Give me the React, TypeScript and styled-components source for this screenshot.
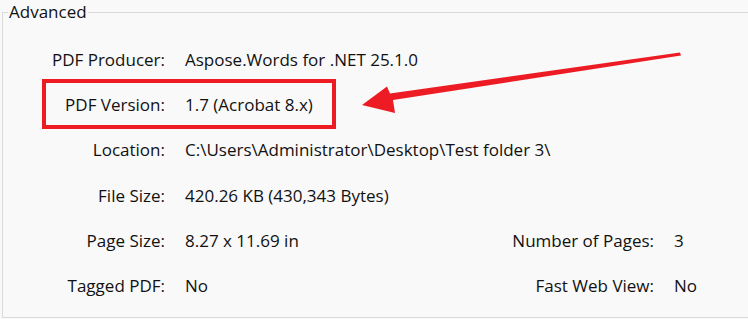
import React from "react";
import styled, { createGlobalStyle } from "styled-components";

const GlobalStyle = createGlobalStyle`
  html, body {
    margin: 0;
    padding: 0;
    background: #f9f9f9;
    overflow: hidden;
  }
  body {
    font-family: "Open Sans", "Noto Sans", sans-serif;
    color: #111;
  }
`;

const Page = styled.div`
  position: relative;
  width: 748px;
  height: 319px;
  overflow: hidden;
  background: #f9f9f9;
`;

const Group = styled.fieldset`
  margin: 2px 0 0 2px;
  width: 780px;
  height: 316px;
  box-sizing: border-box;
  border: 1px solid #dadada;
  padding: 0;
`;

const Legend = styled.legend`
  font-size: 17px;
  padding: 0 1px;
  margin-left: 5px;
  line-height: 20px;
  color: #111;
`;

const Grid = styled.div`
  display: grid;
  grid-template-columns: 162px 1fr auto 57px;
  grid-auto-rows: 45.2px;
  column-gap: 20px;
  padding-top: 15px;
  width: 728px;
  font-size: 17px;
`;

const Label = styled.div`
  text-align: right;
  align-self: center;
  white-space: nowrap;
`;

const Value = styled.div<{ $span?: boolean }>`
  align-self: center;
  white-space: nowrap;
  grid-column: ${(p) => (p.$span ? "2 / 5" : "auto")};
`;

const Highlight = styled.div`
  position: absolute;
  left: 42px;
  top: 79px;
  width: 294px;
  height: 50px;
  box-sizing: border-box;
  border: 4px solid #ed1c24;
  pointer-events: none;
`;

const Arrow = styled.svg`
  position: absolute;
  left: 0;
  top: 0;
  pointer-events: none;
`;

const wide = [
  ["PDF Producer:", "Aspose.Words for .NET 25.1.0"],
  ["PDF Version:", "1.7 (Acrobat 8.x)"],
  ["Location:", "C:\\Users\\Administrator\\Desktop\\Test folder 3\\"],
  ["File Size:", "420.26 KB (430,343 Bytes)"],
];

const paired = [
  ["Page Size:", "8.27 x 11.69 in", "Number of Pages:", "3"],
  ["Tagged PDF:", "No", "Fast Web View:", "No"],
];

export default function App() {
  return (
    <Page>
      <GlobalStyle />
      <Group>
        <Legend>Advanced</Legend>
        <Grid>
          {wide.map(([l, v]) => (
            <React.Fragment key={l}>
              <Label>{l}</Label>
              <Value $span>{v}</Value>
            </React.Fragment>
          ))}
          {paired.map(([l1, v1, l2, v2]) => (
            <React.Fragment key={l1}>
              <Label>{l1}</Label>
              <Value>{v1}</Value>
              <Label>{l2}</Label>
              <Value>{v2}</Value>
            </React.Fragment>
          ))}
        </Grid>
      </Group>
      <Highlight />
      <Arrow width="748" height="319" viewBox="0 0 748 319">
        <path
          d="M680 52.5 L681 55.5 L393 100 L395 113 L362 105 L387 86.5 L390 93.5 Z"
          fill="#ed1c24"
        />
      </Arrow>
    </Page>
  );
}
